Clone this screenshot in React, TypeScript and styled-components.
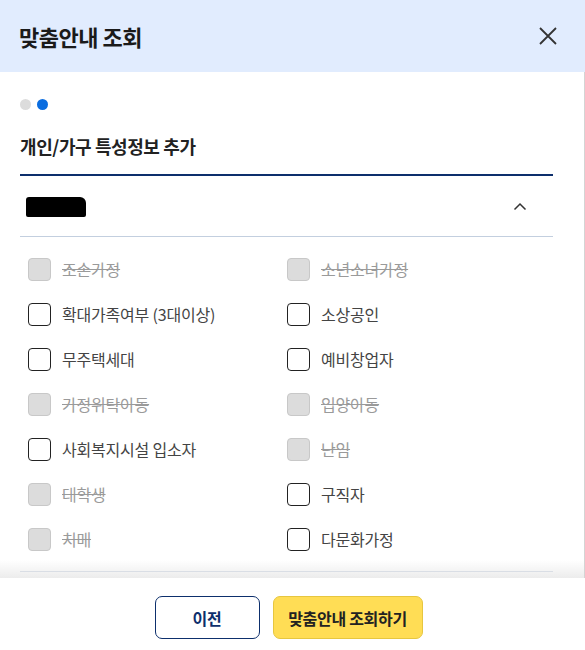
import React from "react";
import styled, { createGlobalStyle } from "styled-components";

const Global = createGlobalStyle`
  html, body { margin: 0; padding: 0; background: #fff; }
  body { font-family: "Noto Sans CJK KR", "Noto Sans", sans-serif; color: #222; }
  * { box-sizing: border-box; }
`;

const Modal = styled.div`
  width: 585px;
  height: 650px;
  display: flex;
  flex-direction: column;
  background: #fff;
  overflow: hidden;
`;

const Header = styled.header`
  height: 72px;
  flex: none;
  background: #e1ecfe;
  display: flex;
  align-items: center;
  justify-content: space-between;
  padding: 0 26px 0 19px;
`;

const Title = styled.h1`
  margin: 0;
  font-size: 22px;
  font-weight: 700;
  letter-spacing: -0.5px;
  color: #1a1a1a;
`;

const CloseBtn = styled.button`
  border: 0;
  background: none;
  padding: 0;
  width: 22px;
  height: 22px;
  display: flex;
  align-items: center;
  justify-content: center;
  cursor: pointer;
`;

const BodyWrap = styled.div`
  position: relative;
  flex: 1;
  border-right: 1px solid #d4d4d4;
  overflow: hidden;
`;

const Body = styled.div`
  padding: 27px 31px 0 20px;
`;

const Dots = styled.div`
  display: flex;
  gap: 6px;
`;

const Dot = styled.span<{ $active?: boolean }>`
  width: 11px;
  height: 11px;
  border-radius: 50%;
  background: ${(p) => (p.$active ? "#0a6de0" : "#dcdcdc")};
`;

const SectionTitle = styled.h2`
  margin: 23px 0 0;
  font-size: 18px;
  font-weight: 700;
  letter-spacing: -0.4px;
  color: #222;
  line-height: 26px;
  padding-bottom: 15px;
  border-bottom: 2px solid #0d2f6c;
`;

const AccHead = styled.div`
  height: 61px;
  display: flex;
  align-items: center;
  justify-content: space-between;
  padding: 0 26px 0 6px;
  border-bottom: 1px solid #c3cfdf;
`;

const Redacted = styled.span`
  display: inline-block;
  width: 60px;
  height: 20px;
  background: #000;
  border-radius: 3px 6px 2px 2px;
  margin-top: 1px;
`;

const Grid = styled.div`
  display: grid;
  grid-template-columns: 259px 1fr;
  row-gap: 23px;
  padding: 21px 0 21px 8px;
  border-bottom: 1px solid #b9c6d8;
`;

const Item = styled.label<{ $disabled?: boolean }>`
  display: flex;
  align-items: center;
  gap: 11px;
  height: 22px;
  font-size: 16px;
  letter-spacing: -0.2px;
  color: ${(p) => (p.$disabled ? "#9a9a9a" : "#444")};
  text-decoration: ${(p) => (p.$disabled ? "line-through" : "none")};
`;

const Box = styled.span<{ $disabled?: boolean }>`
  width: 23px;
  height: 23px;
  flex: none;
  border-radius: 4px;
  border: 1px solid ${(p) => (p.$disabled ? "#c8c8c8" : "#222")};
  background: ${(p) => (p.$disabled ? "#dcdcdc" : "#fff")};
`;

const Fade = styled.div`
  position: absolute;
  left: 0;
  right: 0;
  bottom: 0;
  height: 18px;
  background: linear-gradient(to bottom, rgba(255,255,255,0), #ececec);
  pointer-events: none;
`;

const Footer = styled.footer`
  height: 72px;
  flex: none;
  display: flex;
  justify-content: center;
  align-items: flex-start;
  gap: 13px;
  padding: 18px 8px 0 0;
`;

const Btn = styled.button<{ $primary?: boolean }>`
  height: 43px;
  padding: 0;
  width: ${(p) => (p.$primary ? "150px" : "105px")};
  border-radius: 7px;
  font-family: inherit;
  font-size: 16px;
  font-weight: 700;
  letter-spacing: -0.3px;
  border: 1px solid ${(p) => (p.$primary ? "#e6c640" : "#0d2f6c")};
  background: ${(p) => (p.$primary ? "#ffdd55" : "#fff")};
  color: ${(p) => (p.$primary ? "#222" : "#0d2f6c")};
`;

const items: { label: string; disabled?: boolean }[] = [
  { label: "조손가정", disabled: true },
  { label: "소년소녀가정", disabled: true },
  { label: "확대가족여부 (3대이상)" },
  { label: "소상공인" },
  { label: "무주택세대" },
  { label: "예비창업자" },
  { label: "가정위탁아동", disabled: true },
  { label: "입양아동", disabled: true },
  { label: "사회복지시설 입소자" },
  { label: "난임", disabled: true },
  { label: "대학생", disabled: true },
  { label: "구직자" },
  { label: "치매", disabled: true },
  { label: "다문화가정" },
];

export default function App() {
  return (
    <>
      <Global />
      <Modal>
        <Header>
          <Title>맞춤안내 조회</Title>
          <CloseBtn aria-label="닫기">
            <svg width="18" height="18" viewBox="0 0 18 18">
              <path d="M1 1 L17 17 M17 1 L1 17" stroke="#333" strokeWidth="1.8" fill="none" />
            </svg>
          </CloseBtn>
        </Header>
        <BodyWrap>
          <Body>
            <Dots>
              <Dot />
              <Dot $active />
            </Dots>
            <SectionTitle>개인/가구 특성정보 추가</SectionTitle>
            <AccHead>
              <Redacted />
              <svg width="14" height="9" viewBox="0 0 14 9">
                <path d="M1.5 7.5 L7 2 L12.5 7.5" stroke="#333" strokeWidth="1.5" fill="none" />
              </svg>
            </AccHead>
            <Grid>
              {items.map((it) => (
                <Item key={it.label} $disabled={it.disabled}>
                  <Box $disabled={it.disabled} />
                  {it.label}
                </Item>
              ))}
            </Grid>
          </Body>
          <Fade />
        </BodyWrap>
        <Footer>
          <Btn>이전</Btn>
          <Btn $primary>맞춤안내 조회하기</Btn>
        </Footer>
      </Modal>
    </>
  );
}
